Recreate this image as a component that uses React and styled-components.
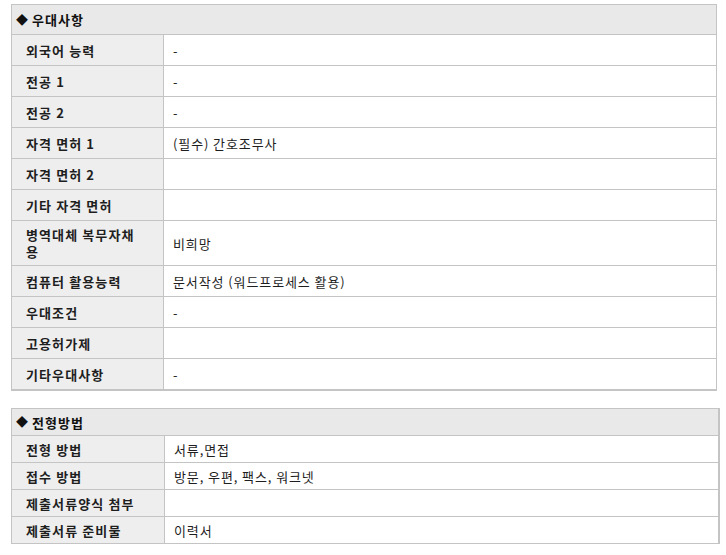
import React from "react";
import styled, { createGlobalStyle } from "styled-components";

const GlobalStyle = createGlobalStyle`
  body {
    margin: 0;
    background: #ffffff;
    font-family: "Noto Sans CJK KR", "Noto Sans", sans-serif;
    font-size: 13px;
    color: #222222;
  }
`;

const Page = styled.div`
  padding: 4px 0 0 11px;
  display: flex;
  flex-direction: column;
  gap: 17px;
`;

const Table = styled.section`
  width: ${(p) => p.$width}px;
  box-sizing: border-box;
  border: 1px solid #c4c4c4;
  border-bottom-width: ${(p) => (p.$thick ? 2 : 1)}px;
  border-right-width: ${(p) => (p.$thickRight ? 2 : 1)}px;
`;

const Title = styled.div`
  background: #e9e9e9;
  height: ${(p) => p.$h}px;
  display: flex;
  align-items: center;
  padding-left: 4px;
  font-weight: bold;
  font-size: 13px;
  letter-spacing: 1px;
  color: #111111;
  gap: 3px;
`;

const Diamond = styled.span`
  font-size: 12px;
  line-height: 1;
`;

const Row = styled.div`
  display: grid;
  grid-template-columns: ${(p) => p.$label}px 1fr;
  border-top: 1px solid #c4c4c4;
  min-height: ${(p) => p.$h}px;
`;

const Label = styled.div`
  background: #eeeeee;
  border-right: 1px solid #c4c4c4;
  padding: ${(p) => p.$pad}px 22px ${(p) => p.$pad}px 14px;
  font-weight: bold;
  letter-spacing: 1.1px;
  line-height: 17px;
  color: #1e1e1e;
  display: flex;
  align-items: center;
`;

const Value = styled.div`
  padding: ${(p) => p.$pad}px 9px;
  line-height: 17px;
  letter-spacing: 0.9px;
  color: #1e1e1e;
  display: flex;
  align-items: center;
`;

const benefits = [
  ["외국어 능력", "-"],
  ["전공 1", "-"],
  ["전공 2", "-"],
  ["자격 면허 1", "(필수) 간호조무사"],
  ["자격 면허 2", ""],
  ["기타 자격 면허", ""],
  ["병역대체 복무자채용", "비희망"],
  ["컴퓨터 활용능력", "문서작성 (워드프로세스 활용)"],
  ["우대조건", "-"],
  ["고용허가제", ""],
  ["기타우대사항", "-"],
];

const selection = [
  ["전형 방법", "서류,면접"],
  ["접수 방법", "방문, 우편, 팩스, 워크넷"],
  ["제출서류양식 첨부", ""],
  ["제출서류 준비물", "이력서"],
];

function InfoTable({ title, rows, width, label, titleH, rowH, pad, thick, thickRight }) {
  return (
    <Table $width={width} $thick={thick} $thickRight={thickRight}>
      <Title $h={titleH}>
        <Diamond>◆</Diamond>
        {title}
      </Title>
      {rows.map(([k, v]) => (
        <Row key={k} $label={label} $h={rowH}>
          <Label $pad={pad}>{k}</Label>
          <Value $pad={pad}>{v}</Value>
        </Row>
      ))}
    </Table>
  );
}

export default function App() {
  return (
    <>
      <GlobalStyle />
      <Page>
        <InfoTable
          title="우대사항"
          rows={benefits}
          width={706}
          label={152}
          titleH={29}
          rowH={30}
          pad={5}
          thick
        />
        <InfoTable
          title="전형방법"
          rows={selection}
          width={709}
          label={153}
          titleH={26}
          rowH={26}
          pad={4}
          thickRight
        />
      </Page>
    </>
  );
}
